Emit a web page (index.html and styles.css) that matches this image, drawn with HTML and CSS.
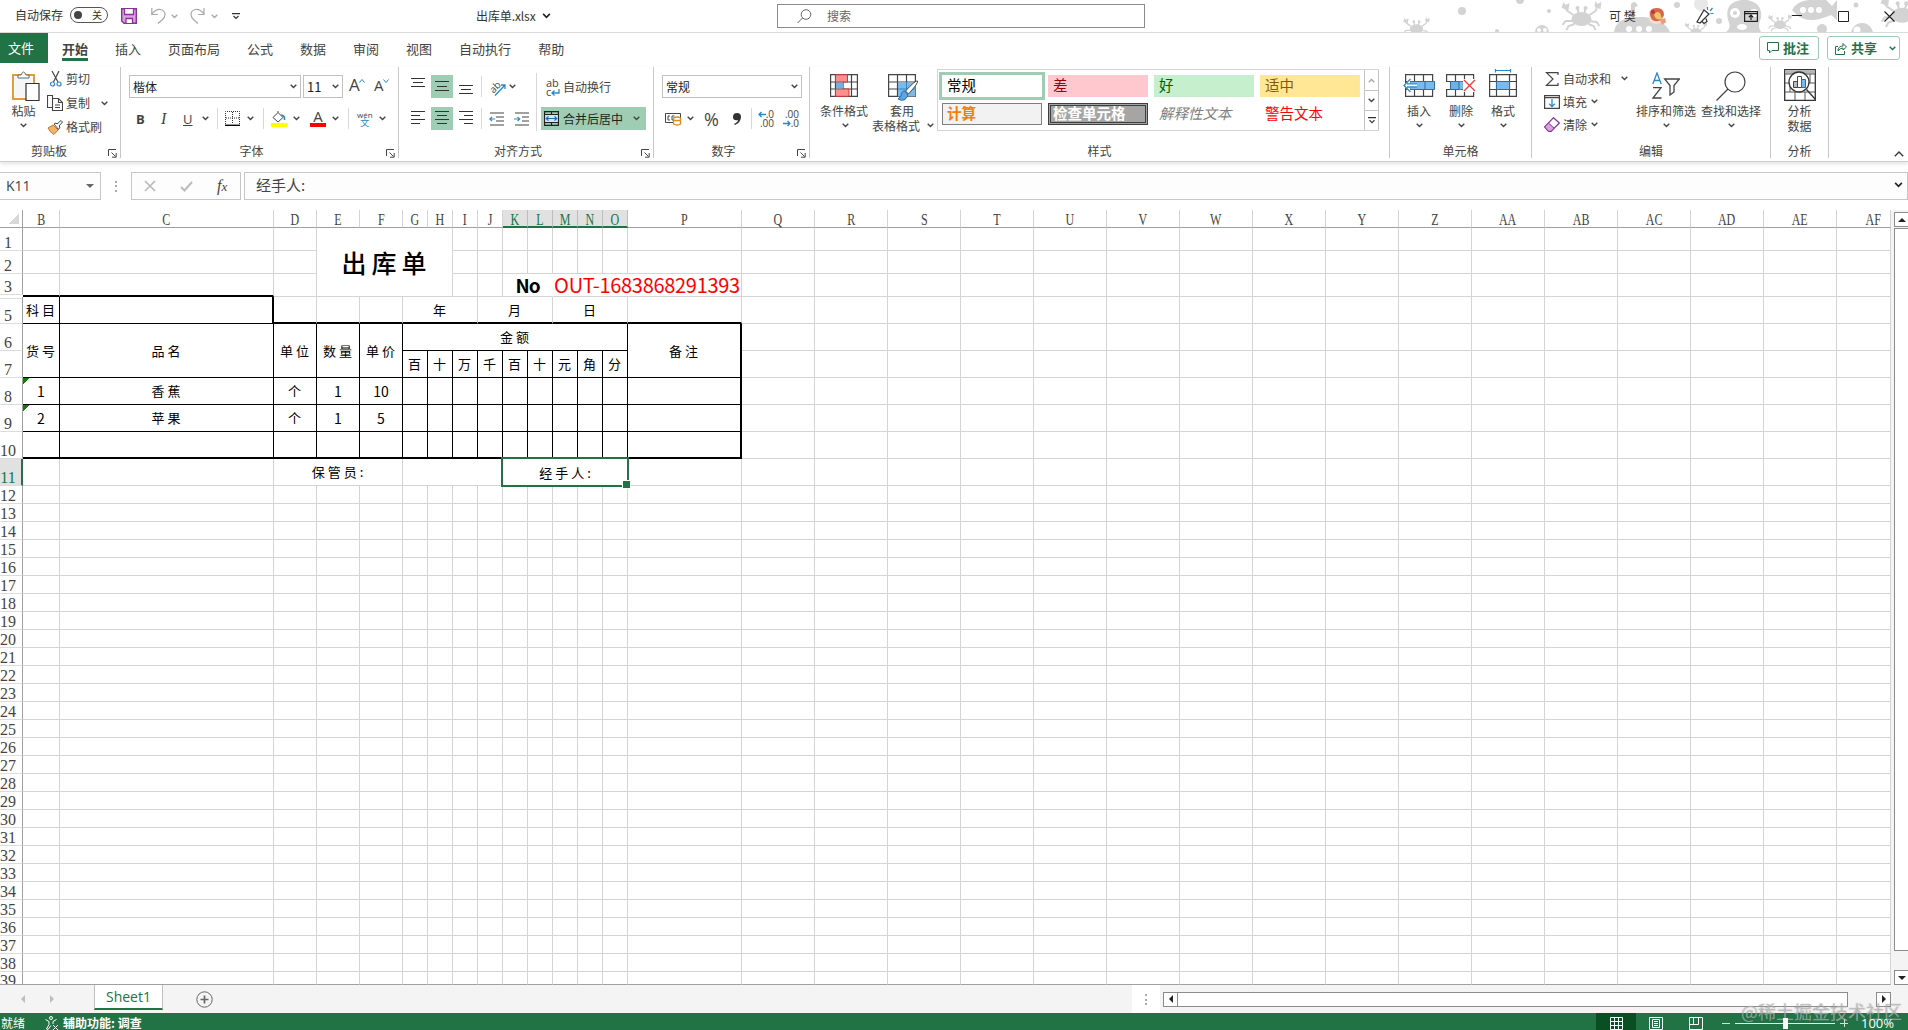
FILE: index.html
```html
<!DOCTYPE html>
<html lang="zh-CN">
<head>
  <meta charset="UTF-8">
  <meta name="viewport" content="width=device-width, initial-scale=1.0">
  <title>出库单.xlsx</title>
  <link rel="stylesheet" href="styles.css">
</head>
<body>
  <svg class="defs" width="0" height="0">
    <symbol id="chev" viewBox="0 0 7 5"><path d="M.7.8 3.5 3.6 6.3.8" fill="none" stroke="currentColor" stroke-width="1.4"/></symbol>
    <symbol id="launch" viewBox="0 0 9 9"><path d="M.5 7V.5H8M3.5 3.5l4 4M8.2 4v4.2H4" fill="none" stroke="#444"/></symbol>
    <symbol id="crab" viewBox="0 0 40 30">
      <ellipse cx="20" cy="18" rx="10" ry="7"/>
      <path d="M12 14 6 10 3 6M28 14l6-4 2-5M12 20l-8 0-3 4M13 23l-6 2-2 4M28 20l7 1 3 4M27 23l5 2 2 4M17 12l-1-5M23 12l1-5" fill="none" stroke="#d3d3d3" stroke-width="2"/>
      <path d="M0 7 2 1l2 3 4-2-1 7zM33 6l1-6 2 3 4-2-1 7z"/>
      <circle cx="16" cy="7" r="2"/><circle cx="24" cy="7" r="2"/>
    </symbol>
  </svg>

  <div class="titlebar">
    <svg class="sea" width="508" height="32" viewBox="1400 0 508 32" fill="#d3d3d3">
      <use href="#crab" x="1403" y="17" width="27" height="20"/>
      <circle cx="1462" cy="11" r="4"/><circle cx="1520" cy="0" r="4"/><circle cx="1549" cy="11" r="2"/><circle cx="1497" cy="31" r="2"/>
      <use href="#crab" x="1561" y="1" width="41" height="30"/>
      <circle cx="1542" cy="32" r="7"/><circle cx="1539" cy="30" r="2" fill="#fff"/><circle cx="1545" cy="30" r="2" fill="#fff"/>
      <path d="M1614 32q2-13 17-14V4q4-5 7 2l-3 1v10h9q20 2 26 15z"/>
      <circle cx="1629" cy="29" r="3" fill="#fff"/><circle cx="1639" cy="29" r="3" fill="#fff"/><circle cx="1649" cy="29" r="3" fill="#fff"/>
      <circle cx="1677" cy="5" r="3"/><circle cx="1701" cy="4" r="7" fill="#e8e8e8"/>
      <use href="#crab" x="1684" y="22" width="24" height="17"/><circle cx="1719" cy="21" r="3"/>
      <path d="M1726 32q6-4 2-12-4-18 14-20h5q16 3 14 18-4 8 0 14z"/>
      <circle cx="1735" cy="13" r="5" fill="#fff"/><circle cx="1735" cy="13" r="2"/><circle cx="1754" cy="13" r="4" fill="#fff"/><ellipse cx="1742" cy="27" rx="5" ry="3" fill="#fff"/>
      <use href="#crab" x="1768" y="14" width="24" height="18"/>
      <path d="M1792 10q6-11 22-10h12l6 6 5-6v20l-6-5q-22 10-34 0z"/>
      <circle cx="1803" cy="10" r="3" fill="#fff"/><circle cx="1811" cy="10" r="3" fill="#fff"/><circle cx="1819" cy="10" r="3" fill="#fff"/>
      <circle cx="1822" cy="29" r="5"/><circle cx="1856" cy="5" r="2.5"/>
      <circle cx="1862" cy="34" r="11"/><circle cx="1857" cy="30" r="3.5" fill="#fff"/>
      <use href="#crab" x="1880" y="-4" width="44" height="32"/>
    </svg>
    <span class="small">自动保存</span>
    <span class="toggle"><i></i>关</span>
    <svg width="16" height="16" viewBox="0 0 16 16"><path d="M.7.7h14.6v14.6H3L.7 13z" fill="#d9a3dd" stroke="#8c3197" stroke-width="1.4"/><path d="M3.5 1v5.5h9V1M5 15v-4.5h6.500V15" fill="#fff" stroke="#8c3197" stroke-width="1.3"/></svg>
    <svg width="15" height="16" viewBox="0 0 15 16" fill="none" stroke="#a8a8a8" stroke-width="1.2"><path d="M.8 0v6.500h6M1 6Q5 .8 9.500 1.500q4.500 1 4.500 5 0 3-3 5.500L7 15.500"/></svg>
    <svg class="chev pale"><use href="#chev"/></svg>
    <svg width="15" height="16" viewBox="0 0 15 16" fill="none" stroke="#a8a8a8" stroke-width="1.2"><path d="M14 0v6.500H8M14 6Q10 .8 5.500 1.500 1 2.500 1 6.500q0 3 3 5.500l4 3.500"/></svg>
    <svg class="chev pale"><use href="#chev"/></svg>
    <svg width="8" height="7" viewBox="0 0 8 7" fill="none" stroke="#333" stroke-width="1.2"><path d="M0 .6h8M1.500 3 4 5.500 6.500 3"/></svg>
    <span class="doc-name">出库单.xlsx</span>
    <svg class="chev dark"><use href="#chev"/></svg>
    <div class="search">
      <svg width="15" height="15" viewBox="0 0 15 15" fill="none" stroke="#666"><circle cx="9" cy="5.500" r="4.800"/><path d="M5.500 9 .5 14"/></svg>
      <span>搜索</span>
    </div>
    <span class="user">可 樊</span>
    <svg width="19" height="19" viewBox="0 0 19 19"><circle cx="7" cy="9" r="8" fill="#f6ddd0"/><path d="M1 8Q0 1 8 1q7 0 7 7l-3 5q-9 4-11-5z" fill="#d8674b"/><path d="M5 8q2-5 6-2l2 6q-6 2-8-4z" fill="#f4c46c"/><circle cx="4" cy="5" r="2" fill="#b23a4b"/><path d="m11 13 5-2 1 4-4 3z" fill="#ef9a7a"/></svg>
    <svg width="18" height="18" viewBox="0 0 18 18" fill="none" stroke="#333" stroke-width="1.200"><path d="m8 3 5 4-9 9-3-1zM6 14.500l2 2 3-2-1-3"/><path d="M11.500 3V0M14 4l2.500-3M14.500 6.500h3" stroke="#2b88c8"/></svg>
    <svg width="14" height="11" viewBox="0 0 14 11" fill="none" stroke="#222" stroke-width="1.200"><path d="M.6.6h12.800v9.800H.6zM.6 2.600h12.800M7 9V4.500M4.800 6.300 7 4.200l2.200 2.100"/></svg>
    <svg width="10" height="11" viewBox="0 0 10 11"><path d="M0 4.500h10" stroke="#222"/></svg>
    <svg width="11" height="11" viewBox="0 0 11 11"><path d="M.5.5h10v10H.5z" fill="none" stroke="#222"/></svg>
    <svg width="11" height="11" viewBox="0 0 11 11"><path d="m.5.500 10 10m0-10-10 10" stroke="#222" stroke-width="1.200"/></svg>
  </div>

  <div class="tabs">
    <span class="file">文件</span>
    <nav>
      <b>开始</b><span>插入</span><span>页面布局</span><span>公式</span><span>数据</span><span>审阅</span><span>视图</span><span>自动执行</span><span>帮助</span>
    </nav>
    <div class="actions">
      <span class="action"><svg width="12" height="12" viewBox="0 0 12 12" fill="none" stroke="#217346"><path d="M.5.500h11v8H5L2.500 11V8.500h-2z"/></svg>批注</span>
      <span class="action share"><svg width="12" height="13" viewBox="0 0 12 13" fill="none" stroke="#217346"><path d="M3 4.500H.5v8h9V9M3 9q0-5 5-5V1.500L11.500 5 8 8V6Q5 6 3 9z"/></svg>共享<svg class="chev"><use href="#chev"/></svg></span>
    </div>
  </div>

  <div class="ribbon">
    <section class="group clipboard">
      <div class="body">
        <div class="big paste">
          <svg width="28" height="30" viewBox="0 0 28 30"><path d="M1 4h21v24H1z" fill="#fff" stroke="#e39b3b" stroke-width="2"/><path d="M3 6h17v20H3z" fill="#f6f6f6"/><path d="M6 7V4h3q2.500-6 5 0h3v3z" fill="#fff" stroke="#666"/><path d="M14 12.500h13v17H14z" fill="#fff" stroke="#333" stroke-width="1.200"/></svg>
          <span>粘贴</span><svg class="chev"><use href="#chev"/></svg>
        </div>
        <div class="clip-list">
          <div><svg width="12" height="16" viewBox="0 0 12 16" fill="none"><path d="m2 0 6 11M9 0 3.500 11" stroke="#444" stroke-width="1.200"/><circle cx="2.500" cy="13" r="2" stroke="#2b88c8" stroke-width="1.200"/><circle cx="9" cy="13" r="2" stroke="#2b88c8" stroke-width="1.200"/></svg><span>剪切</span></div>
          <div><svg width="16" height="16" viewBox="0 0 16 16" fill="#fff" stroke="#444" stroke-width="1.100"><path d="M.5.500h5v12h-5zM5.500 3.500h6l4 4v8h-10zM11.500 3.500v4h4M8 10h5M8 12.500h5"/></svg><span>复制</span><svg class="chev"><use href="#chev"/></svg></div>
          <div><svg width="16" height="15" viewBox="0 0 16 15"><path d="m1 8 5-3 5 5-4 4.500q-4-2-6-6.500z" fill="#f4b36b" stroke="#d8761c"/><path d="m7 4 2-1 1 1 4-3.500 1.500 1.500L12 6l1 1-1.500 2.500z" fill="#fff" stroke="#444"/></svg><span>格式刷</span></div>
        </div>
      </div>
      <footer>剪贴板<svg class="launch"><use href="#launch"/></svg></footer>
    </section>

    <section class="group font">
      <div class="body rows">
        <div class="font-top">
          <span class="select">楷体<svg class="chev"><use href="#chev"/></svg></span>
          <span class="select">11<svg class="chev"><use href="#chev"/></svg></span>
          <span class="grow">A<svg width="6" height="4" viewBox="0 0 6 4"><path d="m.5 3.500 2.500-3 2.500 3" fill="none" stroke="#2b88c8"/></svg></span>
          <span class="grow shrink">A<svg width="6" height="4" viewBox="0 0 6 4"><path d="m.5.500 2.500 3 2.500-3" fill="none" stroke="#2b88c8"/></svg></span>
        </div>
        <div class="font-bottom">
          <b>B</b><i class="ital">I</i><u>U</u><svg class="chev"><use href="#chev"/></svg><i class="sep"></i>
          <svg width="15" height="15" viewBox="0 0 15 15"><path d="M.5 13V.500h14V13M7.500 1v12M1 7h13" fill="none" stroke="#333" stroke-dasharray="1 1"/><path d="M0 14.300h15" stroke="#000" stroke-width="1.400"/></svg>
          <svg class="chev"><use href="#chev"/></svg><i class="sep"></i>
          <svg width="16" height="16" viewBox="0 0 16 16"><path d="m7 1.500 5 5-5 4.500-5-4.500 5-5V0" fill="#fff" stroke="#444"/><path d="M10 4q4 0 3.500 5" stroke="#2b88c8" stroke-width="1.600" fill="none"/><path d="M0 12h16v4H0z" fill="#ff0"/></svg>
          <svg class="chev"><use href="#chev"/></svg>
          <span class="color-a">A</span>
          <svg class="chev"><use href="#chev"/></svg><i class="sep"></i>
          <span class="wen">wén<em>文</em></span>
          <svg class="chev"><use href="#chev"/></svg>
        </div>
      </div>
      <footer>字体<svg class="launch"><use href="#launch"/></svg></footer>
    </section>

    <section class="group align">
      <div class="body align-body">
        <div class="align-grid">
          <svg class="al" viewBox="0 0 22 23"><path d="M4 3.500h14M6 7.500h10M4 11.500h14"/></svg>
          <svg class="al on" viewBox="0 0 22 23"><path d="M4 6.500h14M6 11.500h10M4 15.500h14"/></svg>
          <svg class="al" viewBox="0 0 22 23"><path d="M4 10.500h14M6 14.500h10M4 18.500h14"/></svg>
          <i class="sep"></i>
          <span class="orient"><span>ab</span><svg width="16" height="16" viewBox="0 0 16 16" fill="none" stroke="#2b88c8" stroke-width="1.300"><path d="M5 15.500 15 5M11 5h4v4"/></svg></span>
          <svg class="chev"><use href="#chev"/></svg>
          <svg class="al" viewBox="0 0 22 23"><path d="M4 4.500h14M4 8.500h9M4 12.500h14M4 16.500h9"/></svg>
          <svg class="al on" viewBox="0 0 22 23"><path d="M4 4.500h14M6 8.500h10M4 12.500h14M6 16.500h10"/></svg>
          <svg class="al" viewBox="0 0 22 23"><path d="M4 4.500h14M9 8.500h9M4 12.500h14M9 16.500h9"/></svg>
          <i class="sep"></i>
          <svg class="indent" width="15" height="14" viewBox="0 0 15 14" fill="none" stroke="#444" stroke-width="1.200"><path d="M1 1h14M7 5h8M7 9h8M1 13h14"/><path d="M6 7H.8M3 4.800.8 7 3 9.200" stroke="#2b88c8"/></svg>
          <svg class="indent more" width="15" height="14" viewBox="0 0 15 14" fill="none" stroke="#444" stroke-width="1.200"><path d="M1 1h14M8 5h7M8 9h7M1 13h14"/><path d="M0 7h5.500M3.500 4.800 5.700 7 3.500 9.200" stroke="#2b88c8"/></svg>
        </div>
        <i class="sep tall"></i>
        <div class="wrap-col">
          <div class="wrap"><span class="wrap-icon"><span>ab</span><span>c</span><svg width="9" height="7" viewBox="0 0 9 7" fill="none" stroke="#2b88c8" stroke-width="1.300"><path d="M8 0v4H1M3.500 1.500 1 4l2.500 2.500"/></svg></span>自动换行</div>
          <div class="wrap merge"><svg width="15" height="15" viewBox="0 0 15 15"><path d="M.6.600h13.800v13.800H.6zM.6 3.500h13.800M.6 11.500h13.800M7.500.500v3M7.500 11.500v3" fill="none" stroke="#222" stroke-width="1.200"/><path d="M1.200 4h12.600v7H1.200z" fill="#cfe6f5"/><path d="M2 7.500h11M4.500 5.500l-2.300 2 2.300 2M10.500 5.500l2.300 2-2.300 2" fill="none" stroke="#1f6fb5" stroke-width="1.200"/></svg>合并后居中<svg class="chev"><use href="#chev"/></svg></div>
        </div>
      </div>
      <footer>对齐方式<svg class="launch"><use href="#launch"/></svg></footer>
    </section>

    <section class="group number">
      <div class="body rows">
        <span class="select">常规<svg class="chev"><use href="#chev"/></svg></span>
        <div class="num-row">
          <svg width="17" height="14" viewBox="0 0 17 14" fill="none" stroke="#444"><path d="M.5 1.500h15v9H.5zM5 4H3v4h2M9.500 4H7v4h2"/><path d="M8.500 6q4-2 7 0v6q-3 2-7 0zM8.500 8.500h7" fill="#fff" stroke="#e08a1e" stroke-width="1.300"/></svg>
          <svg class="chev"><use href="#chev"/></svg>
          <span class="pct">%</span>
          <svg width="8" height="12" viewBox="0 0 8 12"><path d="M4 0q4 0 4 4 0 5-6 8l-1-1q4-2 4-4Q0 8 0 4q0-4 4-4z" fill="#333"/></svg>
          <i class="sep"></i>
          <span class="dec"><span><svg width="8" height="7" viewBox="0 0 8 7"><path d="M8 3.500H1M3.500 1 1 3.500 3.500 6" fill="none" stroke="#2b88c8" stroke-width="1.300"/></svg>.0</span><span>.00</span></span>
          <span class="dec"><span>.00</span><span><svg width="8" height="7" viewBox="0 0 8 7"><path d="M0 3.500h7M4.500 1 7 3.500 4.500 6" fill="none" stroke="#2b88c8" stroke-width="1.300"/></svg>.0</span></span>
        </div>
      </div>
      <footer>数字<svg class="launch"><use href="#launch"/></svg></footer>
    </section>

    <section class="group styles">
      <div class="body">
        <div class="big">
          <svg width="28" height="23" viewBox="0 0 28 23"><path d="M.6.600h26.800v21.800H.6zM0 8h28M0 15h28M5.500 0v23M13 0v23M21.500 0v23" fill="#fff" stroke="#444" stroke-width="1.200"/><path d="M5.500.800h12V8h-12zM5.500 15h13.500v7.300H5.500z" fill="#ff8f8f" stroke="#d13438"/><path d="M6 8.500h7v6H6z" fill="#6fb1e0"/></svg>
          <span>条件格式</span><svg class="chev"><use href="#chev"/></svg>
        </div>
        <div class="big table-fmt">
          <svg width="30" height="28" viewBox="0 0 30 28"><path d="M.6.600h26.800v21.800H.6zM0 8h28M0 15h28M9.500 0v23M18.500 0v23" fill="#fff" stroke="#444" stroke-width="1.200"/><path d="M10 8.500h17.500v14H10z" fill="#7db9e8"/><path d="M18.500 8v15M10 15h17.500" stroke="#2b88c8"/><path d="M29.500 7q-2-1-12 10l3 3q10-11 9-13z" fill="#fff" stroke="#444"/><path d="M17 17q-4 0-4 5l-3 3q7 4 10-4z" fill="#5fa3dc" stroke="#1f6fb5"/></svg>
          <span>套用</span><span class="line2">表格格式 <svg class="chev"><use href="#chev"/></svg></span>
        </div>
        <div class="gallery">
          <div class="swatches">
            <span class="sw normal">常规</span><span class="sw bad">差</span><span class="sw good">好</span><span class="sw neutral">适中</span>
            <span class="sw calc">计算</span><span class="sw check">检查单元格</span><span class="sw note">解释性文本</span><span class="sw warn">警告文本</span>
          </div>
          <div class="scroller">
            <span><svg class="chev flip pale"><use href="#chev"/></svg></span>
            <span><svg class="chev"><use href="#chev"/></svg></span>
            <span><svg width="8" height="7" viewBox="0 0 8 7" fill="none" stroke="#333" stroke-width="1.200"><path d="M0 .600h8M1.500 3.200 4 5.700l2.500-2.500"/></svg></span>
          </div>
        </div>
      </div>
      <footer>样式</footer>
    </section>

    <section class="group cells">
      <div class="body">
        <div class="big">
          <svg width="32" height="23" viewBox="0 0 32 23"><path d="M2.600.600h27v21.800h-27zM2 7.500h28M2 15.500h28M11.500 0v23M20.500 0v23" fill="#fff" stroke="#444" stroke-width="1.200"/><path d="M7 7.500h24.500v8H7z" fill="#7db9e8" stroke="#2b6ea8"/><path d="M22 7.500v8" stroke="#2b6ea8"/><path d="M0 11.500 7 5v4.500h7v4H7V18z" fill="#fff"/><path d="M14 9.800H4M14 13H4M7.500 5 1 11.500 7.500 18" fill="none" stroke="#2b88c8" stroke-width="1.300"/></svg>
          <span>插入</span><svg class="chev"><use href="#chev"/></svg>
        </div>
        <div class="big">
          <svg width="30" height="23" viewBox="0 0 30 23"><path d="M.6.600h27v6.900H.6zM.6 15.500h27v6.900H.6zM9.500.500v7M18.500.500v7M9.500 15.500v7M18.500 15.500v7" fill="#fff" stroke="#444" stroke-width="1.200"/><path d="M4.500 7.500H16l4 4-4 4H4.500z" fill="#7db9e8"/><path d="M4.500 7.500H13v8H4.500z" fill="#6fb1e0" stroke="#2b6ea8"/><path d="M17 5h13v13H17z" fill="#fff"/><path d="m18 6 11 11M29 6 18 17" stroke="#e8413c" stroke-width="1.400"/></svg>
          <span>删除</span><svg class="chev"><use href="#chev"/></svg>
        </div>
        <div class="big">
          <svg class="fmt-icon" width="28" height="28" viewBox="0 0 28 28"><path d="M6 1.500h16M6.500 0v3.500M21.500 0v3.500" stroke="#2b88c8" stroke-width="1.200"/><path d="M.6 5.600h26.800v21.800H.6zM0 12.500h28M0 20.500h28M7.500 5v23M20.500 5v23" fill="#fff" stroke="#444" stroke-width="1.200"/><path d="M7.500 12.500h13v8h-13z" fill="#7db9e8" stroke="#2b6ea8"/></svg>
          <span>格式</span><svg class="chev"><use href="#chev"/></svg>
        </div>
      </div>
      <footer>单元格</footer>
    </section>

    <section class="group edit">
      <div class="body">
        <div class="edit-list">
          <div class="sum"><svg width="14" height="14" viewBox="0 0 14 14"><path d="M13 3V.600H1.500L8 7l-6.500 6.400H13V11" fill="none" stroke="#444" stroke-width="1.200"/></svg>自动求和<svg class="chev"><use href="#chev"/></svg></div>
          <div><svg width="16" height="14" viewBox="0 0 16 14" fill="none"><path d="M.6.600h14.800v12.800H.6zM.6 2.600h14.800" stroke="#444" stroke-width="1.200"/><path d="M8 4v7.500M5.200 8.800 8 11.600l2.800-2.800" stroke="#2b88c8" stroke-width="1.300"/></svg>填充<svg class="chev"><use href="#chev"/></svg></div>
          <div><svg width="16" height="15" viewBox="0 0 16 15"><path d="M9.500.700 15.300 6 7 14.300H4.500L.7 10z" fill="#fff" stroke="#8c3197" stroke-width="1.200"/><path d="m4.500 6 5.700 5.200L7 14.300H4.500L.7 10z" fill="#d9a3dd" stroke="#8c3197"/></svg>清除<svg class="chev"><use href="#chev"/></svg></div>
        </div>
        <div class="big sort">
          <svg width="28" height="27" viewBox="0 0 28 27" fill="none" stroke-width="1.300"><path d="M.8 12 5 1l4.200 11M2.200 8.500h5.600" stroke="#2b88c8"/><path d="M1 15.600h8L1 26h8.500M12.600 7h14.800L22 13.500V20l-4 3v-9.500z" stroke="#444"/></svg>
          <span>排序和筛选</span><svg class="chev"><use href="#chev"/></svg>
        </div>
        <div class="big find">
          <svg width="30" height="30" viewBox="0 0 30 30" fill="none" stroke="#444" stroke-width="1.200"><circle cx="19" cy="11" r="10"/><path d="M12 18 .500 29.500"/></svg>
          <span>查找和选择</span><svg class="chev"><use href="#chev"/></svg>
        </div>
      </div>
      <footer>编辑</footer>
    </section>

    <section class="group analyse">
      <div class="body">
        <div class="big">
          <svg width="32" height="32" viewBox="0 0 32 32"><path d="M.7.700h30.600v30.600H.7z" fill="#fff" stroke="#333" stroke-width="1.300"/><path d="M1.300 1.300h29.400v3.200H1.300z" fill="#b5b5b5"/><path d="M1 5h30M1 14h30M1 23h30M6 14v9M11 23v8M21 23v8M26 5v9" stroke="#555"/><circle cx="15" cy="13" r="10" fill="#fff" stroke="#333" stroke-width="1.300"/><path d="M9.500 12.500h4v6h-4z" fill="#bbb" stroke="#444"/><path d="M13.500 7.500h4v11h-4z" fill="#fff" stroke="#444"/><path d="M17.500 10.500h4v8h-4z" fill="#7db9e8" stroke="#1f6fb5"/><path d="m22.500 20.500 9 10" stroke="#333" stroke-width="1.300"/></svg>
          <span>分析</span><span class="line2">数据</span>
        </div>
      </div>
      <footer>分析</footer>
    </section>
    <svg class="collapse" width="10" height="6" viewBox="0 0 10 6"><path d="m.8 5.200 4.200-4.200 4.200 4.200" fill="none" stroke="#333" stroke-width="1.300"/></svg>
  </div>

  <div class="formula-bar">
    <div class="name-box">K11<i class="caret"></i></div>
    <span class="dots"></span>
    <div class="fx">
      <svg width="12" height="12" viewBox="0 0 12 12"><path d="m1 1 10 10M11 1 1 11" stroke="#bcbcbc" stroke-width="1.700"/></svg>
      <svg width="13" height="11" viewBox="0 0 13 11"><path d="m1 6 3.500 3.500L12 1" fill="none" stroke="#bcbcbc" stroke-width="2"/></svg>
      <em>f<small>x</small></em>
    </div>
    <div class="formula">经手人:<svg class="chev dark"><use href="#chev"/></svg></div>
  </div>

  <div class="work">
    <div class="sheet" id="sheet"></div>
    <div class="vscroll">
      <span class="sb-btn"><i class="tri up"></i></span>
      <span class="v-thumb"></span>
      <span class="sb-btn"><i class="tri down"></i></span>
    </div>
  </div>

  <div class="sheet-bar">
    <i class="tri left pale-tri"></i><i class="tri right pale-tri"></i>
    <span class="sheet-tab">Sheet1</span>
    <svg class="add" width="17" height="17" viewBox="0 0 17 17" fill="none" stroke="#666"><circle cx="8.500" cy="8.500" r="7.700"/><path d="M4.500 8.500h8M8.500 4.500v8" stroke-width="1.700"/></svg>
    <span class="splitter"><span class="dots"></span></span>
    <div class="hscroll">
      <span class="sb-btn"><i class="tri left"></i></span>
      <span class="h-thumb"></span>
      <span class="sb-btn"><i class="tri right"></i></span>
    </div>
  </div>

  <div class="status">
    <span>就绪</span>
    <svg width="14" height="15" viewBox="0 0 14 15" fill="none" stroke="#fff"><circle cx="6" cy="2" r="1.500"/><path d="M.5 3.500 4 5.500v3L1.500 13l1.500.500L6 9.500M11.500 3.500 8 5.500V8M8 9l5 5m0-5-5 5"/></svg>
    <b>辅助功能: 调查</b>
    <div class="views">
      <span class="view on"><svg width="13" height="13" viewBox="0 0 13 13" fill="none" stroke="#fff"><path d="M.5.500h12v12H.5zM4.500.500v12M8.500.500v12M.5 4.500h12M.5 8.500h12"/></svg></span>
      <span class="view"><svg width="14" height="13" viewBox="0 0 14 13" fill="none" stroke="#fff"><path d="M.5.500h13v12H.5zM3.500 2.500h7v8h-7zM5 4.500h4M5 6.500h4M5 8.500h4"/></svg></span>
      <span class="view"><svg width="14" height="13" viewBox="0 0 14 13" fill="none" stroke="#fff"><path d="M.5.500h13v12H.5zM4.500.500v7M9.500.500v7M.5 7.500h9"/></svg></span>
    </div>
    <div class="zoom"><i class="minus"></i><span class="track"><i></i></span><i class="plus"></i><span>100%</span></div>
  </div>
  <div class="watermark">@稀土掘金技术社区</div>

  <script>
    const cols = ['B', 'C', 'D', 'E', 'F', 'G', 'H', 'I', 'J', 'K', 'L', 'M', 'N', 'O', 'P', 'Q', 'R', 'S', 'T',
      'U', 'V', 'W', 'X', 'Y', 'Z', 'AA', 'AB', 'AC', 'AD', 'AE', 'AF'];
    // row 4 is hidden
    const rows = [1, 2, 3];
    for (let n = 5; n <= 39; n++) rows.push(n);

    // [from, to, text, classes]
    const cells = [
      ['B3', 'B3', '', 'tb'], ['C3', 'C3', '', 'tb'],
      ['E1', 'H3', '出库单', 'title'],
      ['K3', 'L3', 'No', 'no'], ['M3', 'P3', 'OUT-1683868291393', 'code'],
      ['B5', 'B5', '科目', 'k'], ['C5', 'C5', '', 'k tr'],
      ['D5', 'D5', '', 'tb'], ['E5', 'E5', '', 'tb'], ['F5', 'F5', '', 'tb'],
      ['G5', 'I5', '年', 'tb'], ['J5', 'L5', '月', 'tb'], ['M5', 'O5', '日', 'tb'], ['P5', 'P5', '', 'tb'],
      ['B6', 'B7', '货号', 'k'], ['C6', 'C7', '品名', 'k'], ['D6', 'D7', '单位', 'k'],
      ['E6', 'E7', '数量', 'k'], ['F6', 'F7', '单价', 'k'], ['G6', 'O6', '金额', 'k'],
      ['P6', 'P7', '备注', 'k tr'],
      ['D11', 'F11', '保管员:', ''], ['G11', 'J11', '', ''], ['K11', 'O11', '经手人:', 'selected']
    ];
    '百十万千百十元角分'.split('').forEach((t, i) => cells.push([cols[5 + i] + '7', cols[5 + i] + '7', t, 'k']));
    const items = { 8: ['1', '香蕉', '个', '1', '10'], 9: ['2', '苹果', '个', '1', '5'], 10: [] };
    for (const r in items) {
      for (let c = 0; c < 15; c++) {
        let cls = 'k';
        if (c === 14) cls += ' tr';
        if (r === '10') cls += ' tb';
        if (c === 0 && r !== '10') cls += ' flag';
        if (c !== 1 && c !== 2) cls += ' num';
        cells.push([cols[c] + r, cols[c] + r, items[r][c] || '', cls]);
      }
    }

    const sheet = document.getElementById('sheet');

    function add(r1, c1, r2, c2, cls, text) {
      const el = document.createElement('div');
      el.className = cls;
      el.style.gridArea = r1 + '/' + c1 + '/' + (r2 + 1) + '/' + (c2 + 1);
      if (text) {
        const s = document.createElement('span');
        s.textContent = text;
        el.appendChild(s);
      }
      sheet.appendChild(el);
    }

    function pos(ref) {
      const m = ref.match(/([A-Z]+)(\d+)/);
      return [rows.indexOf(+m[2]) + 2, cols.indexOf(m[1]) + 2];
    }

    add(1, 1, 1, 1, 'corner');
    cols.forEach((c, i) => add(1, i + 2, 1, i + 2, 'col-head' + (i >= 9 && i <= 13 ? ' active' : ''), c));
    rows.forEach((r, i) => {
      let cls = 'row-head';
      if (r === 11) cls += ' active';
      if (r === 3) cls += ' before-hidden';
      if (r === 39) cls += ' last';
      add(i + 2, 1, i + 2, 1, cls, String(r));
    });

    const used = {};
    cells.forEach(([a, b, text, cls]) => {
      const [r1, c1] = pos(a), [r2, c2] = pos(b);
      for (let r = r1; r <= r2; r++) for (let c = c1; c <= c2; c++) used[r + ',' + c] = true;
      add(r1, c1, r2, c2, 'cell ' + cls, text);
    });
    for (let r = 2; r < rows.length + 2; r++) {
      for (let c = 2; c < cols.length + 2; c++) {
        if (!used[r + ',' + c]) add(r, c, r, c, r === rows.length + 1 ? 'cell last' : 'cell');
      }
    }
  </script>
</body>
</html>
```
FILE: styles.css
```css
* {
  box-sizing: border-box;
}

body {
  margin: 0;
  width: 1908px;
  height: 1030px;
  overflow: hidden;
  position: relative;
  display: flex;
  flex-direction: column;
  font-family: "Noto Sans CJK SC", sans-serif;
  font-size: 12px;
  line-height: 16px;
  color: #444;
  background: #fff;
  white-space: nowrap;
}

svg {
  display: block;
  flex: none;
}

.defs {
  position: absolute;
}

.chev {
  width: 7px;
  height: 5px;
  color: #444;
}

.chev.pale {
  color: #aaa;
}

.chev.dark {
  width: 9px;
  height: 6px;
  color: #222;
}

.chev.flip {
  transform: rotate(180deg);
}

.sep {
  width: 1px;
  height: 21px;
  background: #d8d8d8;
}

/* title bar */
.titlebar {
  position: relative;
  height: 33px;
  flex: none;
  padding-left: 15px;
  border-bottom: 1px solid #dadada;
  display: grid;
  grid-template-columns: 55px 51px 30px 20px 19px 21px 21px 244px 66px 235px 832px 40px 47px 48px 48px 46px 46px 24px;
  align-items: center;
  color: #333;
}

.titlebar > * {
  position: relative;
}

.titlebar .sea {
  position: absolute;
  right: 0;
  top: 0;
}

.titlebar .small {
  top: -1px;
}

.toggle {
  width: 38px;
  height: 16px;
  border: 1px solid #555;
  border-radius: 8px;
  display: flex;
  align-items: center;
  justify-content: space-between;
  padding: 0 5px 0 3px;
  font-size: 10px;
  top: -1px;
}

.toggle i {
  width: 8px;
  height: 8px;
  border-radius: 50%;
  background: #444;
}

.doc-name {
  letter-spacing: -0.1px;
}

.search {
  width: 368px;
  height: 24px;
  border: 1px solid #8a8a8a;
  padding-left: 19px;
  display: flex;
  align-items: center;
  gap: 15px;
  color: #666;
  font-size: 12px;
}

/* tabs */
.tabs {
  height: 34px;
  flex: none;
  display: flex;
  font-size: 13px;
}

.tabs .file {
  width: 48px;
  height: 30px;
  line-height: 30px;
  text-align: center;
  padding-right: 6px;
  color: #fff;
  background: #217346;
}

.tabs nav {
  display: flex;
  gap: 27px;
  padding-left: 14px;
  line-height: 31px;
}

.tabs nav b {
  height: 28px;
  border-bottom: 3px solid #217346;
}

.actions {
  margin: 3px 8px 0 auto;
  display: flex;
  gap: 8px;
}

.action {
  width: 60px;
  height: 24px;
  border: 1px solid #9ccab2;
  border-radius: 3px;
  display: flex;
  align-items: center;
  padding-left: 7px;
  gap: 4px;
  color: #217346;
  font-weight: bold;
}

.action.share {
  width: 73px;
}

.action .chev {
  margin-left: 8px;
  color: #217346;
}

/* ribbon */
.ribbon {
  height: 95px;
  flex: none;
  display: flex;
  border-bottom: 1px solid #cdcdcd;
  box-shadow: 0 2px 4px #e4e4e4;
}

.group {
  height: 91px;
  border-right: 1px solid #c8c8c8;
  display: flex;
  flex-direction: column;
}

.group .body {
  height: 76px;
  display: flex;
}

.group footer {
  height: 15px;
  display: flex;
  justify-content: center;
  align-items: center;
  position: relative;
}

.launch {
  position: absolute;
  right: 3px;
  bottom: 0;
  width: 9px;
  height: 9px;
}

.clipboard { width: 121px; }
.font { width: 278px; }
.align { width: 255px; }
.number { width: 156px; }
.styles { width: 580px; }
.cells { width: 142px; }
.edit { width: 239px; }
.analyse { width: 58px; }

.clipboard footer { padding-right: 22px; }
.font footer,
.align footer,
.number footer { padding-right: 16px; }

.big {
  display: grid;
  grid-template-rows: 36px 15px 15px;
  justify-items: center;
  align-content: start;
  align-items: center;
  line-height: 15px;
}

.big > svg:first-child {
  align-self: start;
  margin-top: 7px;
}

.big .line2 {
  display: flex;
  align-items: center;
  gap: 5px;
}

.paste {
  width: 47px;
}

.big.paste > svg:first-child {
  margin-top: 4px;
  margin-left: 4px;
}

.clip-list > div {
  height: 24px;
  display: grid;
  grid-template-columns: 19px 35px 7px;
  align-items: center;
}

.clip-list > div:first-child > svg:first-child {
  margin-left: 3px;
}

.body.rows {
  flex-direction: column;
  gap: 9px;
  padding: 8px 8px 0;
}

.select {
  height: 23px;
  border: 1px solid #c0c0c0;
  padding: 0 3px;
  display: flex;
  align-items: center;
  justify-content: space-between;
  color: #222;
}

.font-top {
  height: 23px;
  display: grid;
  grid-template-columns: 172px 40px 15px 15px;
  column-gap: 2px;
}

.font-top .select:nth-child(2) {
  font-size: 13px;
}

.grow {
  display: flex;
  margin-left: 4px;
  font: 17px/19px "Open Sans", sans-serif;
}

.grow svg {
  margin: 4px 0 0 -1px;
}

.shrink {
  margin-left: 12px;
  font-size: 15px;
  line-height: 21px;
}

.font-bottom {
  height: 23px;
  padding-left: 7px;
  display: grid;
  grid-template-columns: 24px 23px 19px 15px 8px 22px 16px 8px 22px 17px 22px 16px 9px 22px 7px;
  align-items: center;
  font: 13px/20px "Open Sans", sans-serif;
}

.font-bottom .ital {
  margin-left: 1px;
  font-family: "Liberation Serif", serif;
  font-size: 16px;
}

.color-a {
  width: 16px;
  height: 17px;
  line-height: 13px;
  text-align: center;
  font-size: 15px;
  border-bottom: 4px solid #f00;
}

.wen {
  display: grid;
  width: 15px;
  font-size: 8px;
  line-height: 7px;
}

.wen em {
  font: 9px/9px "Noto Sans CJK SC", sans-serif;
  text-align: center;
  color: #2b88c8;
}

.align-body {
  padding: 8px 7px 0 8px;
}

.align-grid {
  width: 129px;
  height: 55px;
  display: grid;
  grid-template: 23px 23px / 24px 24px 26px 8px 20px 27px;
  row-gap: 9px;
  align-items: center;
}

.al {
  width: 22px;
  height: 23px;
  fill: none;
  stroke: #333;
  stroke-width: 1.1;
}

.al.on {
  background: #9fcdb3;
}

.indent.more {
  margin-left: 5px;
}

.orient {
  position: relative;
  font: 10px/12px "Open Sans", sans-serif;
}

.orient span {
  display: block;
  width: 11px;
  transform: rotate(-45deg);
}

.orient svg {
  position: absolute;
  left: 1px;
  top: -1px;
}

.sep.tall {
  height: 58px;
  margin-top: -2px;
}

.wrap-col {
  margin-left: 4px;
  display: flex;
  flex-direction: column;
  gap: 9px;
}

.wrap {
  width: 105px;
  height: 23px;
  padding-left: 5px;
  display: flex;
  align-items: center;
  gap: 4px;
}

.wrap-icon {
  width: 13px;
  display: grid;
  grid-template-columns: 5px 9px;
  grid-template-rows: 9px 9px;
  font: 11px/9px "Open Sans", sans-serif;
}

.wrap-icon span:first-child {
  grid-column: 1 / 3;
}

.wrap-icon svg {
  margin-top: 2px;
}

.merge {
  background: #9fcdb3;
  padding-left: 3px;
  color: #222;
}

.merge .chev {
  margin-left: 6px;
}

.num-row {
  height: 23px;
  padding-left: 3px;
  display: grid;
  grid-template-columns: 22px 17px 29px 18px 7px 25px 18px;
  align-items: center;
}

.number .select {
  width: 140px;
}

.pct {
  font: 18px/20px "Open Sans", sans-serif;
}

.dec {
  width: 16px;
  font: 10px/9px "Open Sans", sans-serif;
}

.dec > span {
  height: 9px;
  display: flex;
  align-items: center;
  justify-content: flex-end;
}

.styles .big {
  width: 48px;
  margin-left: 10px;
}

.styles .big .chev:last-child {
  margin-left: 2px;
}

.styles .table-fmt {
  width: 60px;
  margin-left: 4px;
}

.table-fmt > span:nth-child(2) {
  margin-right: 2px;
}

.gallery {
  width: 442px;
  height: 62px;
  margin: 2px 0 0 5px;
  border: 1px solid #d4d4d4;
  border-right: 0;
  display: flex;
}

.swatches {
  flex: 1;
  padding: 5px 0 0 4px;
  display: grid;
  grid-template: 22px 22px / repeat(4, 100px);
  gap: 6px;
}

.sw {
  padding-left: 5px;
  font-size: 14.5px;
  line-height: 20px;
}

.sw.normal {
  color: #000;
  outline: 3px solid #9fcdb3;
}

.sw.bad {
  color: #9c0006;
  background: #ffc7ce;
}

.sw.good {
  color: #006100;
  background: #c6efce;
}

.sw.neutral {
  color: #8a5a00;
  background: #ffe796;
}

.sw.calc {
  color: #fa7d00;
  background: #f2f2f2;
  border: 1px solid #7f7f7f;
  padding-left: 4px;
  font-weight: bold;
  line-height: 17px;
}

.sw.check {
  color: #fff;
  background: #a5a5a5;
  border: 3px double #3f3f3f;
  padding-left: 2px;
  font-weight: bold;
  line-height: 14px;
}

.sw.note {
  color: #7f7f7f;
  font-style: italic;
}

.sw.warn {
  color: #f00;
}

.scroller {
  width: 15px;
  display: grid;
  grid-template-rows: 20px 20px 20px;
  border-right: 1px solid #c4c4c4;
  border-left: 1px solid #c4c4c4;
}

.scroller span {
  display: grid;
  place-items: center;
}

.scroller span + span {
  border-top: 1px solid #c4c4c4;
}

.cells .big {
  width: 42px;
}

.cells .body {
  padding-left: 8px;
}

.big > .fmt-icon:first-child {
  margin-top: 2px;
}

.edit-list {
  width: 104px;
  padding-left: 12px;
}

.edit-list div {
  height: 23px;
  display: grid;
  grid-template-columns: 19px 28px 8px;
  align-items: center;
}

.edit-list .sum {
  grid-template-columns: 19px 58px 8px;
}

.edit-list .sum > svg:first-child {
  margin-left: 1px;
}

.sort {
  width: 60px;
}

.find {
  width: 60px;
  margin-left: 5px;
}

.big.sort > svg:first-child {
  margin-top: 5px;
}

.big.find > svg:first-child {
  margin-top: 4px;
}

.analyse .big {
  width: 58px;
}

.big > svg:first-child:nth-last-child(3) {
  margin-bottom: -4px;
}

.analyse .big > svg:first-child {
  margin-top: 2px;
}

.collapse {
  margin: 84px 0 0 65px;
}

/* formula bar */
.formula-bar {
  height: 48px;
  flex: none;
  padding-top: 10px;
  display: flex;
}

.formula-bar > div {
  height: 28px;
  border: 1px solid #c6c6c6;
  background: #fdfdfd;
  display: flex;
  align-items: center;
}

.name-box {
  width: 101px;
  padding: 0 6px;
  justify-content: space-between;
  font: 14px/20px "Open Sans", sans-serif;
}

.formula-bar .name-box {
  border-left: 0;
}

.caret {
  border: 4px solid transparent;
  border-top-color: #666;
  border-bottom: 0;
}

.dots {
  width: 2px;
  height: 11px;
  background: repeating-linear-gradient(#aaa 0 2px, transparent 2px 4.500px);
}

.formula-bar .dots {
  margin: 9px 14px 0;
}

.fx {
  width: 110px;
  padding-left: 12px;
  gap: 24px;
}

.fx em {
  font: italic 16px/20px "Liberation Serif", serif;
}

.fx small {
  font-size: 13px;
}

.formula {
  width: 1664px;
  margin-left: 3px;
  padding: 0 4px 3px 11px;
  justify-content: space-between;
  font-size: 15px;
}

/* worksheet */
.work {
  height: 775px;
  flex: none;
  display: flex;
  background: #f4f4f4;
}

.sheet {
  width: 1891px;
  display: grid;
  grid-template-columns: 23px 37px 214px repeat(3, 43px) repeat(9, 25px) 114px repeat(15, 73px) 54px;
  grid-template-rows: 18px repeat(3, 23px) repeat(7, 27px) repeat(27, 18px) 13px;
  background: #fff;
}

.corner {
  border-right: 1px solid #a0a0a0;
  border-bottom: 1px solid #a0a0a0;
  background: linear-gradient(135deg, transparent 50%, #d8d8d8 50%) 9px 4px / 10px 10px no-repeat;
}

.col-head,
.row-head {
  font-family: "Liberation Serif", serif;
  font-size: 16px;
}

.col-head {
  display: flex;
  justify-content: center;
  line-height: 19px;
  border-right: 1px solid #d4d4d4;
  border-bottom: 1px solid #a0a0a0;
}

.col-head:nth-child(32) {
  justify-content: flex-start;
  padding-left: 26px;
}

.col-head span {
  transform: scaleX(0.75);
}

.col-head.active {
  color: #217346;
  background: #e1e1e1;
  border-right-color: #bdbdbd;
  border-bottom: 2px solid #217346;
}

.row-head {
  display: flex;
  align-items: flex-end;
  justify-content: center;
  padding-right: 6px;
  line-height: 15px;
  overflow: hidden;
  border-right: 1px solid #a0a0a0;
  border-bottom: 1px solid #dcdcdc;
}

.row-head.last {
  align-items: flex-start;
  line-height: 17px;
}

.row-head.last,
.cell.last {
  border-bottom-color: #a0a0a0;
}

.row-head.active {
  color: #217346;
  background: #e1e1e1;
  border-right: 2px solid #217346;
  padding-right: 5px;
}

.row-head.before-hidden {
  margin-bottom: 2px;
  box-shadow: 0 3px 0 #fff, 0 4px 0 #dcdcdc;
}

.cell {
  display: flex;
  align-items: center;
  justify-content: center;
  border-right: 1px solid #d4d4d4;
  border-bottom: 1px solid #d4d4d4;
  color: #000;
  font-size: 13px;
  letter-spacing: 3px;
}

.cell > span {
  margin-left: 2px;
}

.cell.k {
  border-color: #000;
}

.cell.tr {
  border-right: 2px solid #000;
}

.cell.tb {
  border-bottom: 2px solid #000;
}

.cell[class="cell tb"] {
  border-bottom-color: #000;
}

.cell.num {
  font-size: 14px;
  letter-spacing: 0;
}

.cell.num > span {
  margin-left: 0;
}

.cell.title {
  font-size: 25px;
  font-weight: 500;
  letter-spacing: 5px;
  padding-left: 2px;
}

.cell.no {
  border-right-color: #fff;
  font-size: 19px;
  font-weight: bold;
  letter-spacing: -1px;
}

.cell.code {
  color: #f00;
  font-size: 20px;
  letter-spacing: -0.3px;
}

.cell.no > span,
.cell.code > span {
  margin-left: 0;
}

.cell.flag {
  background: linear-gradient(135deg, #107c10 50%, transparent 50%) 0 0 / 6px 6px no-repeat;
}

.cell.selected {
  position: relative;
  border: 0;
}

.cell.selected::before {
  content: "";
  position: absolute;
  inset: -2px -1px -1px -2px;
  border: 2px solid #217346;
}

.cell.selected::after {
  content: "";
  position: absolute;
  right: -3px;
  bottom: -3px;
  width: 7px;
  height: 7px;
  background: #217346;
  border: 1px solid #fff;
}

.tri {
  border: 4px solid transparent;
}

.tri.up { border-bottom-color: #222; border-top: 0; }
.tri.down { border-top-color: #222; border-bottom: 0; }
.tri.left { border-right-color: #222; border-left: 0; }
.tri.right { border-left-color: #222; border-right: 0; }
.tri.left.pale-tri { border-right-color: #bdbdbd; }
.tri.right.pale-tri { border-left-color: #bdbdbd; }

.sb-btn {
  width: 15px;
  height: 15px;
  flex: none;
  display: grid;
  place-items: center;
  background: #fff;
  border: 1px solid #8c8c8c;
}

.vscroll {
  margin-left: 3px;
  width: 15px;
  padding-top: 2px;
  display: flex;
  flex-direction: column;
}

.v-thumb {
  height: 723px;
  flex: none;
  margin: 1px 0 19px;
  background: #fff;
  border: 1px solid #8c8c8c;
}

/* sheet tabs */
.sheet-bar {
  height: 28px;
  flex: none;
  display: flex;
  align-items: center;
  background: #f4f4f4;
  padding-left: 21px;
}

.sheet-bar > .tri + .tri {
  margin-left: 25px;
}

.sheet-tab {
  width: 69px;
  height: 25px;
  margin: -4px 0 0 40px;
  background: #fff;
  border: 1px solid #c0c0c0;
  border-top: 0;
  border-bottom: 2px solid #217346;
  color: #217346;
  text-align: center;
  font: 14px/23px "Open Sans", sans-serif;
}

.add {
  margin-left: 33px;
}

.splitter {
  width: 28px;
  height: 28px;
  margin-left: 919px;
  display: grid;
  place-items: center;
  background: #fff;
}

.hscroll {
  margin-left: 3px;
  display: flex;
}

.h-thumb {
  width: 671px;
  margin: 0 28px 0 -1px;
  background: #fff;
  border: 1px solid #8c8c8c;
}

/* status bar */
.status {
  height: 20px;
  flex: none;
  display: flex;
  align-items: center;
  padding-left: 1px;
  color: #fff;
  background: #217346;
}

.status > svg {
  margin: 0 4px 0 20px;
}

.views {
  display: flex;
  margin-left: auto;
}

.view {
  width: 40px;
  height: 20px;
  display: grid;
  place-items: center;
}

.view.on {
  background: #0a4f24;
}

.zoom {
  position: relative;
  z-index: 1;
  width: 192px;
  padding-left: 6px;
  display: flex;
  align-items: center;
  font: 13px/18px "Open Sans", sans-serif;
}

.minus {
  width: 8px;
  height: 1px;
  background: #cfe3d7;
}

.plus {
  width: 8px;
  height: 8px;
  margin: 0 13px 0 5px;
  background: linear-gradient(#cfe3d7, #cfe3d7) 0 4px / 8px 1px no-repeat, linear-gradient(#cfe3d7, #cfe3d7) 4px 0 / 1px 8px no-repeat;
}

.track {
  width: 100px;
  height: 1px;
  margin-left: 5px;
  background: #e3efe8;
  display: flex;
  align-items: center;
  justify-content: center;
}

.track i {
  width: 5px;
  height: 11px;
  background: #fff;
}

.watermark {
  position: absolute;
  right: 6px;
  bottom: 8px;
  font-size: 18px;
  line-height: 22px;
  color: rgba(255, 255, 255, 0.4);
  text-shadow: 0 0 1px rgba(90, 90, 90, 0.7);
}
```
